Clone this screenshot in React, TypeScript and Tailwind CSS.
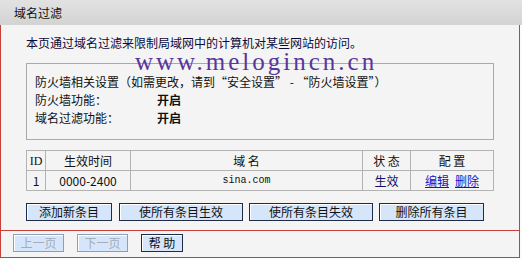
import React from "react";

const cjk = { fontFamily: '"Noto Sans CJK SC", "Liberation Sans", sans-serif' };

function Btn({
  label,
  w,
  disabled,
}: {
  label: string;
  w: string;
  disabled?: boolean;
}) {
  return (
    <button
      className={`${w} h-[18px] flex items-center justify-center text-[12px] leading-none bg-[#d5e5fa] border shadow-[inset_1px_1px_0_#ffffff] ${
        disabled
          ? "text-[#a6acb8] border-[#8f9db5]"
          : "text-[#111] border-[#1e2c4a]"
      }`}
    >
      {label}
    </button>
  );
}

export default function App() {
  return (
    <div
      className="relative w-[522px] h-[259px] bg-[#fbfbfb] overflow-hidden text-[#111]"
      style={cjk}
    >
      {/* header */}
      <div className="h-[25px] w-[522px] bg-gradient-to-b from-[#e2e2e2] to-[#d3d3d3] pl-[14px] flex items-center text-[12px]">
        域名过滤
      </div>

      {/* main */}
      <div className="w-[520px] h-[206px] border-l border-r border-b border-[#c7413a] bg-[#f4f4f4] pl-[25px] pt-[11px] flex flex-col">
        <div className="text-[12px] leading-[14px] text-[#0b0b3a]">
          本页通过域名过滤来限制局域网中的计算机对某些网站的访问。
        </div>

        {/* settings box */}
        <div className="mt-[13px] w-[468px] h-[77px] border border-[#a9a9a9] pl-[8px] pt-[9px] text-[12px] leading-[18px]">
          <div>防火墙相关设置（如需更改，请到“安全设置” - “防火墙设置”）</div>
          <div className="flex">
            <span className="w-[122px]">防火墙功能：</span>
            <span className="font-bold">开启</span>
          </div>
          <div className="flex">
            <span className="w-[122px]">域名过滤功能：</span>
            <span className="font-bold">开启</span>
          </div>
        </div>

        {/* rules table */}
        <table className="mt-[10px] w-[468px] border-collapse text-[12px] text-center">
          <tbody>
            <tr className="h-[20px]">
              <td className="w-[19px] border border-[#b3b3b3] p-0" style={{ fontFamily: '"Liberation Serif", serif' }}>
                ID
              </td>
              <td className="w-[85px] border border-[#b3b3b3] p-0">生效时间</td>
              <td className="w-[232px] border border-[#b3b3b3] p-0">域 名</td>
              <td className="w-[48px] border border-[#b3b3b3] p-0">状 态</td>
              <td className="border border-[#b3b3b3] p-0">配 置</td>
            </tr>
            <tr className="h-[20px]">
              <td className="border border-[#b3b3b3] p-0">1</td>
              <td className="border border-[#b3b3b3] p-0">0000-2400</td>
              <td
                className="border border-[#b3b3b3] p-0 text-[10px]"
                style={{ fontFamily: '"Liberation Mono", monospace' }}
              >
                sina.com
              </td>
              <td className="border border-[#b3b3b3] p-0 text-[#10106a]">生效</td>
              <td className="border border-[#b3b3b3] p-0">
                <span className="text-[#1414c8] underline">编辑</span>
                <span className="ml-[6px] text-[#1414c8] underline">删除</span>
              </td>
            </tr>
          </tbody>
        </table>

        {/* action buttons */}
        <div className="mt-[12px] flex items-center">
          <Btn label="添加新条目" w="w-[86px]" />
          <div className="ml-[7px]">
            <Btn label="使所有条目生效" w="w-[124px]" />
          </div>
          <div className="ml-[6px]">
            <Btn label="使所有条目失效" w="w-[124px]" />
          </div>
          <div className="ml-[6px]">
            <Btn label="删除所有条目" w="w-[105px]" />
          </div>
        </div>
      </div>

      {/* footer */}
      <div className="w-[520px] h-[27px] border-l border-r border-b border-[#c7413a] bg-[#f4f4f4] pl-[12px] pt-[3px] flex gap-[13px]">
        <Btn label="上一页" w="w-[51px]" disabled />
        <Btn label="下一页" w="w-[51px]" disabled />
        <Btn label="帮 助" w="w-[42px]" />
      </div>

      {/* watermark */}
      <div
        className="absolute left-[135px] top-[49px] text-[25px] leading-[25px] tracking-[3px] text-[#58369a] pointer-events-none"
        style={{ fontFamily: '"Liberation Serif", serif' }}
      >
        www.melogincn.cn
      </div>
    </div>
  );
}
